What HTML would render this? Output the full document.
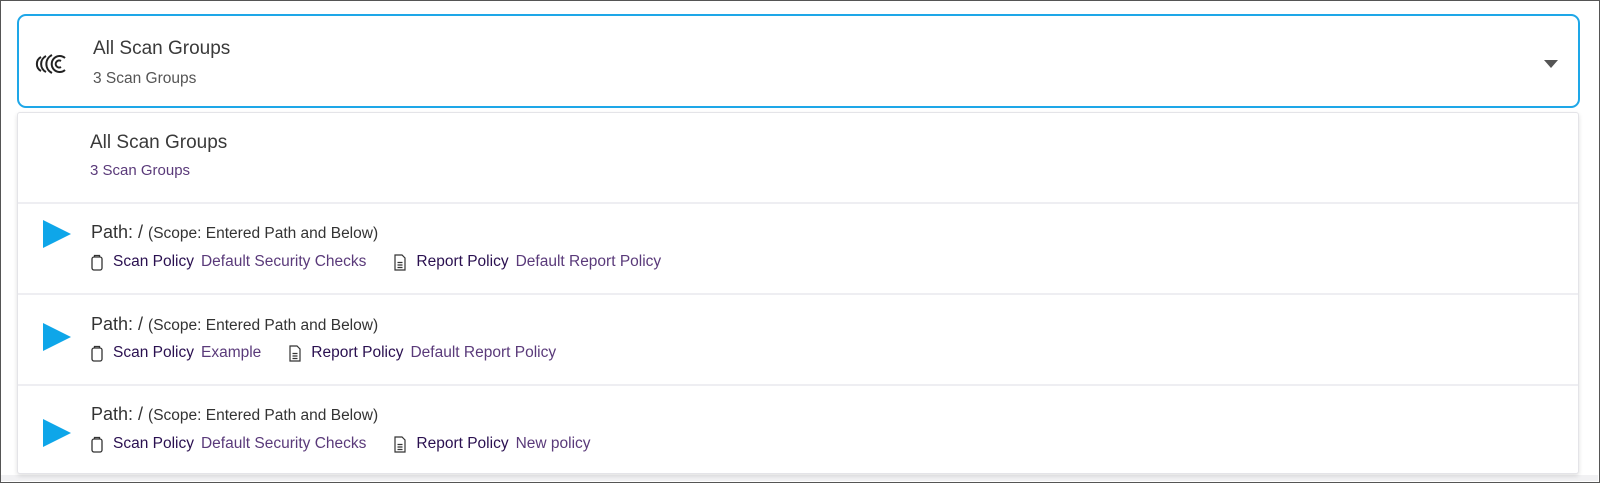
<!DOCTYPE html>
<html><head><style>
*{margin:0;padding:0;box-sizing:border-box}
body{width:1600px;height:483px;background:#fff;font-family:"Liberation Sans",sans-serif;position:relative;overflow:hidden}
.frame{position:absolute;left:0;top:0;width:1600px;height:483px;border:1px solid #555;z-index:5;pointer-events:none}
.bottombar{position:absolute;left:1px;top:475px;width:1597px;height:6px;background:#f1f1f3}
.sel{position:absolute;left:17px;top:14px;width:1563px;height:94px;border:2px solid #1ea7e8;border-radius:9px;background:#fff}
.menu{position:absolute;left:17px;top:112px;width:1562px;height:362px;background:#fff;border:1px solid #e4e4e8;border-radius:3px;box-shadow:0 2px 5px rgba(0,0,0,.12)}
.div{position:absolute;left:18px;width:1560px;height:2px;background:#eeeef2}
.a{position:absolute;white-space:nowrap}
.caret{position:absolute;left:1544px;top:60px;width:0;height:0;border-left:7px solid transparent;border-right:7px solid transparent;border-top:8px solid #555}
.tri{position:absolute;left:43px;width:0;height:0;border-top:14.5px solid transparent;border-bottom:14.5px solid transparent;border-left:28px solid #0ea6e9}
.p{font-size:18px;color:#333;line-height:20px}
.p small{font-size:15.5px;color:#333}
.pl{font-size:15.5px;color:#5a3a7a;display:flex;align-items:center;line-height:18px;left:91px}
.pl .k{color:#2a1050;margin-right:7px}
.pl svg{margin-right:10px}
.gap{width:28px}
</style></head><body>
<div class="frame"></div>
<div class="bottombar"></div>
<div class="sel"></div>
<svg style="position:absolute;left:35px;top:53px" width="34" height="22" viewBox="0 0 34 22" fill="none" stroke="#222" stroke-width="2">
<path d="M6 4 A8 8 0 0 0 6 18"/><path d="M11 3 A9 9 0 0 0 11 19"/><path d="M17 2 A10 10 0 0 0 17 20"/><path d="M30 5 A8 8 0 1 0 30 17"/><path d="M26 8 A3.5 3.5 0 1 0 26 14"/>
</svg>
<div class="a" style="left:93px;top:38px;font-size:19px;color:#3a3a3a">All Scan Groups</div>
<div class="a" style="left:93px;top:70px;font-size:15.5px;color:#555">3 Scan Groups</div>
<div class="caret"></div>
<div class="menu"></div>
<div class="div" style="top:202px"></div>
<div class="div" style="top:293px"></div>
<div class="div" style="top:384px"></div>
<div class="a" style="left:90px;top:132px;font-size:19px;color:#3a3a3a">All Scan Groups</div>
<div class="a" style="left:90px;top:162px;font-size:15px;color:#5a3a7a">3 Scan Groups</div>

<div class="tri" style="top:220px"></div>
<div class="a p" style="left:91px;top:222px">Path: / <small>(Scope: Entered Path and Below)</small></div>
<div class="a pl" style="top:253px"><svg width="12" height="17" viewBox="0 0 12 17" fill="none" stroke="#333" stroke-width="1.3"><rect x="1" y="3" width="10" height="13" rx="2"/><path d="M3.5 3V1.5h5V3"/></svg><span class="k">Scan Policy</span>Default Security Checks<span class="gap"></span><svg width="12" height="17" viewBox="0 0 12 17" fill="none" stroke="#333" stroke-width="1.2"><path d="M1 1h7l3 3v12H1z"/><path d="M3.5 8.5h5M3.5 11h5M3.5 13.5h5"/></svg><span class="k">Report Policy</span>Default Report Policy</div>

<div class="tri" style="top:323px"></div>
<div class="a p" style="left:91px;top:314px">Path: / <small>(Scope: Entered Path and Below)</small></div>
<div class="a pl" style="top:344px"><svg width="12" height="17" viewBox="0 0 12 17" fill="none" stroke="#333" stroke-width="1.3"><rect x="1" y="3" width="10" height="13" rx="2"/><path d="M3.5 3V1.5h5V3"/></svg><span class="k">Scan Policy</span>Example<span class="gap"></span><svg width="12" height="17" viewBox="0 0 12 17" fill="none" stroke="#333" stroke-width="1.2"><path d="M1 1h7l3 3v12H1z"/><path d="M3.5 8.5h5M3.5 11h5M3.5 13.5h5"/></svg><span class="k">Report Policy</span>Default Report Policy</div>

<div class="tri" style="top:419px"></div>
<div class="a p" style="left:91px;top:404px">Path: / <small>(Scope: Entered Path and Below)</small></div>
<div class="a pl" style="top:435px"><svg width="12" height="17" viewBox="0 0 12 17" fill="none" stroke="#333" stroke-width="1.3"><rect x="1" y="3" width="10" height="13" rx="2"/><path d="M3.5 3V1.5h5V3"/></svg><span class="k">Scan Policy</span>Default Security Checks<span class="gap"></span><svg width="12" height="17" viewBox="0 0 12 17" fill="none" stroke="#333" stroke-width="1.2"><path d="M1 1h7l3 3v12H1z"/><path d="M3.5 8.5h5M3.5 11h5M3.5 13.5h5"/></svg><span class="k">Report Policy</span>New policy</div>
</body></html>
